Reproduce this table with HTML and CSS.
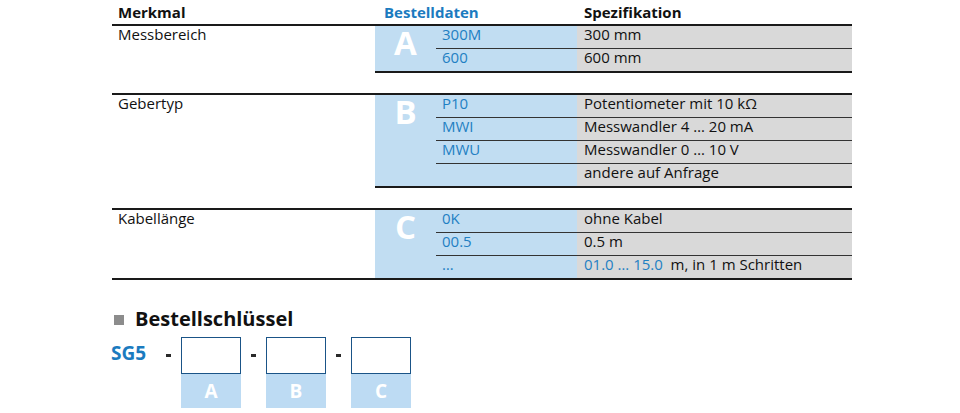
FILE: index.html
```html
<!DOCTYPE html>
<html lang="de">
<head>
<meta charset="utf-8">
<title>Bestelldaten</title>
<link rel="stylesheet" href="styles.css">
</head>
<body>
<div class="page">
  <div class="table">
    <div class="head">
      <div class="h-merk">Merkmal</div>
      <div class="h-best">Bestelldaten</div>
      <div class="h-spez">Spezifikation</div>
    </div>

    <section class="group">
      <div class="merk">Messbereich</div>
      <div class="order">
        <div class="letter">A</div>
        <div class="rows">
          <div class="row"><div class="code">300M</div><div class="spec">300 mm</div></div>
          <div class="row"><div class="code">600</div><div class="spec">600 mm</div></div>
        </div>
      </div>
    </section>

    <section class="group">
      <div class="merk">Gebertyp</div>
      <div class="order">
        <div class="letter">B</div>
        <div class="rows">
          <div class="row"><div class="code">P10</div><div class="spec">Potentiometer mit 10 kΩ</div></div>
          <div class="row"><div class="code">MWI</div><div class="spec">Messwandler 4 … 20 mA</div></div>
          <div class="row"><div class="code">MWU</div><div class="spec">Messwandler 0 … 10 V</div></div>
          <div class="row"><div class="code"></div><div class="spec">andere auf Anfrage</div></div>
        </div>
      </div>
    </section>

    <section class="group group-last">
      <div class="merk">Kabellänge</div>
      <div class="order">
        <div class="letter">C</div>
        <div class="rows">
          <div class="row"><div class="code">0K</div><div class="spec">ohne Kabel</div></div>
          <div class="row"><div class="code">00.5</div><div class="spec">0.5 m</div></div>
          <div class="row"><div class="code">…</div><div class="spec"><span class="blue">01.0 … 15.0</span>&nbsp; m, in 1 m Schritten</div></div>
        </div>
      </div>
    </section>
  </div>

  <div class="key">
    <h2 class="key-title"><span class="bullet"></span>Bestellschlüssel</h2>
    <div class="key-row">
      <div class="sg5">SG5</div>
      <span class="dash"></span>
      <div class="slot"><div class="slot-box"></div><div class="slot-label">A</div></div>
      <span class="dash"></span>
      <div class="slot"><div class="slot-box"></div><div class="slot-label">B</div></div>
      <span class="dash"></span>
      <div class="slot"><div class="slot-box"></div><div class="slot-label">C</div></div>
    </div>
  </div>
</div>
</body>
</html>
```

FILE: styles.css
```css
html, body {
  margin: 0;
  padding: 0;
  background: #ffffff;
}

body {
  font-family: "Open Sans", "Liberation Sans", sans-serif;
  font-size: 15px;
  color: #111111;
}

.page {
  width: 960px;
  height: 413px;
  overflow: hidden;
}

.table {
  margin-left: 112px;
  width: 740px;
}

.head {
  display: grid;
  grid-template-columns: 263px 202px 275px;
  height: 24px;
  box-sizing: border-box;
  padding-top: 2px;
  font-weight: 700;
  line-height: 20px;
}

.h-merk { padding-left: 6px; }
.h-best { padding-left: 9px; color: #1b7bbf; }
.h-spez { padding-left: 7px; }

.group {
  display: grid;
  grid-template-columns: 263px 477px;
  border-top: 2px solid #1a1a1a;
}

.group + .group {
  margin-top: 20px;
}

.merk {
  padding-left: 6px;
  line-height: 17px;
}

.order {
  display: grid;
  grid-template-columns: 61px 416px;
  border-bottom: 2px solid #1a1a1a;
}

.group-last {
  border-bottom: 2px solid #1a1a1a;
}

.group-last .order {
  border-bottom: 0;
}

.letter {
  background: #c1ddf2;
  color: #ffffff;
  font-weight: 700;
  font-size: 33px;
  line-height: 32px;
  text-align: center;
  padding-top: 1px;
}

.rows {
  display: flex;
  flex-direction: column;
}

.row {
  display: grid;
  grid-template-columns: 141px 275px;
  height: 22px;
}

.row + .row {
  border-top: 1px solid #333333;
}

.code {
  background: #c1ddf2;
  color: #1f80c3;
  padding-left: 6px;
  line-height: 17px;
}

.spec {
  background: #d9d9d9;
  padding-left: 7px;
  line-height: 17px;
  white-space: nowrap;
}

.blue {
  color: #1f80c3;
}

.key {
  margin-top: 26px;
  margin-left: 111px;
}

.key-title {
  margin: 0;
  display: flex;
  align-items: center;
  font-size: 20px;
  font-weight: 700;
  line-height: 25px;
  color: #111111;
  padding-left: 3px;
}

.bullet {
  display: inline-block;
  width: 10px;
  height: 10px;
  background: #8c8c8c;
  margin-right: 11px;
  margin-top: 2px;
}

.key-row {
  display: flex;
  align-items: flex-start;
  margin-top: 6px;
}

.sg5 {
  width: 55px;
  margin-top: 5px;
  font-size: 19px;
  font-weight: 700;
  line-height: 22px;
  color: #1b7bbf;
}

.dash {
  display: block;
  width: 5px;
  height: 3px;
  background: #2a2a2a;
  margin-top: 17px;
  margin-right: 10px;
}

.slot + .dash {
  margin-left: 10px;
}

.slot {
  width: 60px;
}

.slot-box {
  height: 37px;
  box-sizing: border-box;
  border: 1px solid #1a5487;
  background: #ffffff;
}

.slot-label {
  height: 34px;
  background: #bddbf3;
  color: #ffffff;
  font-size: 19px;
  font-weight: 700;
  line-height: 34px;
  text-align: center;
}
```
